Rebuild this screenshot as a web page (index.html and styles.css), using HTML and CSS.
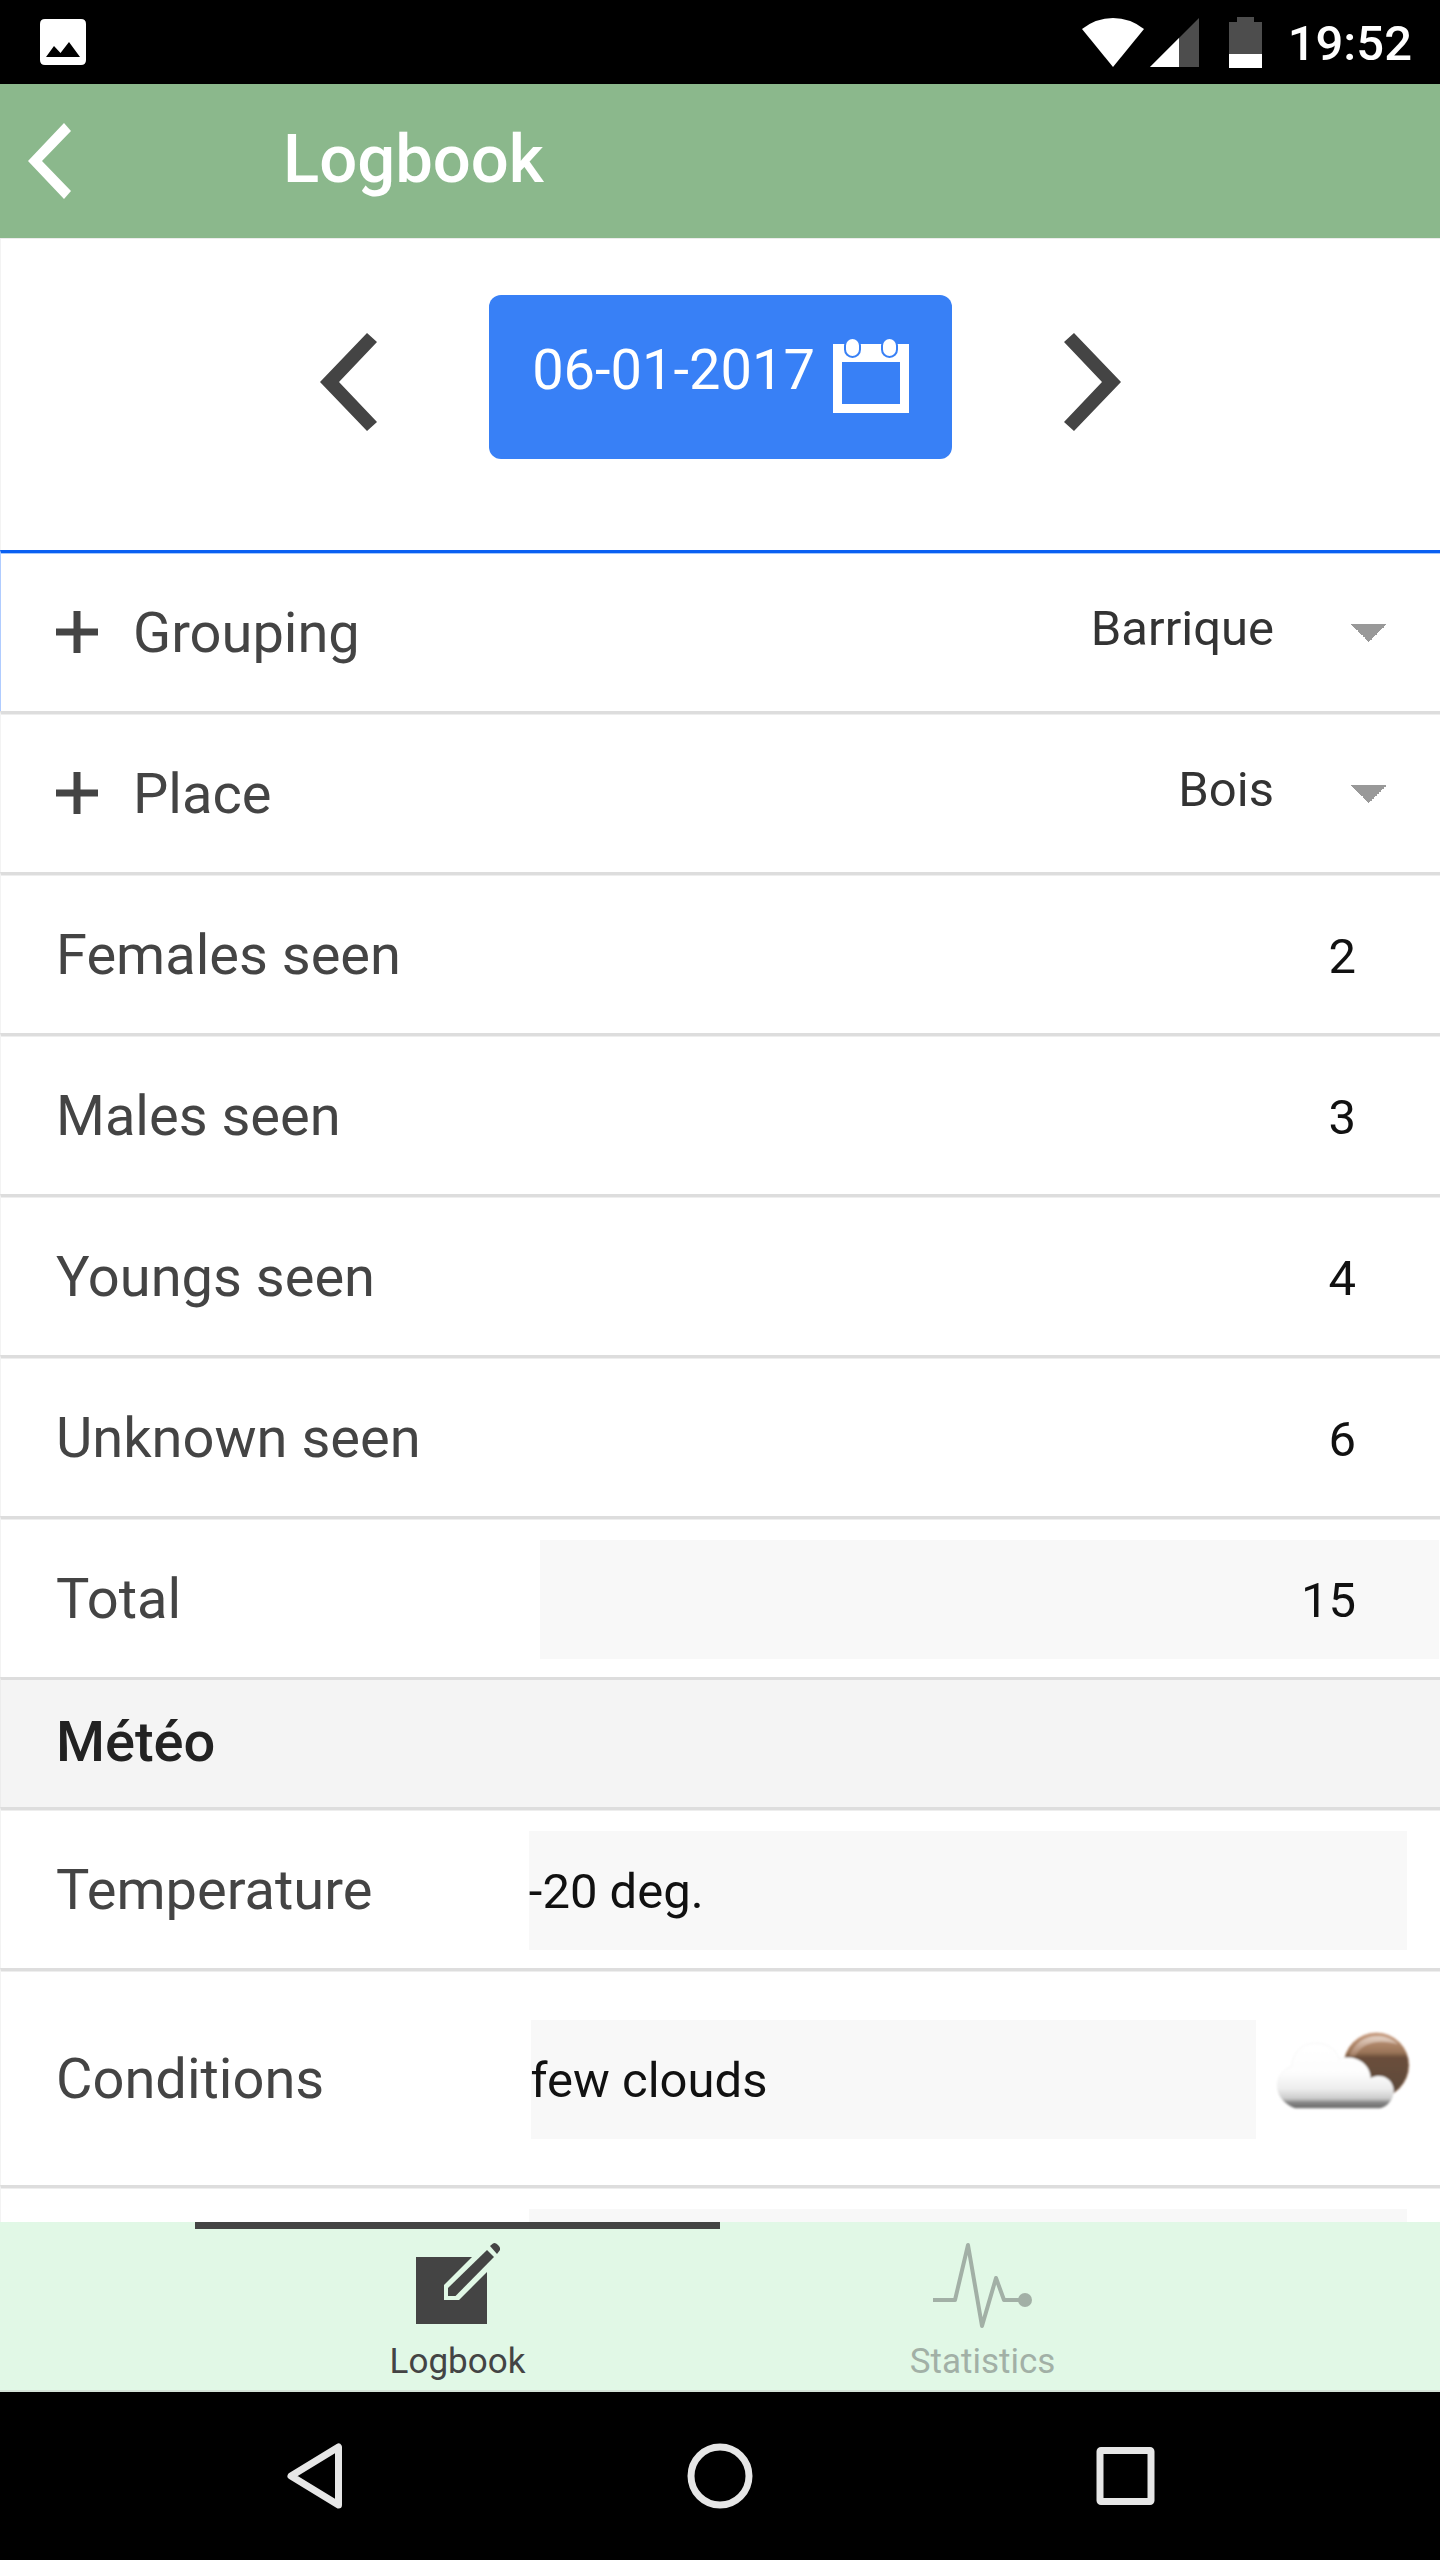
FILE: index.html
```html
<!DOCTYPE html>
<html lang="en">
<head>
  <meta charset="utf-8">
  <meta name="viewport" content="width=device-width, initial-scale=1">
  <title>Logbook</title>
  <link rel="stylesheet" href="styles.css">
</head>
<body>
<div class="app">
  <div class="status">
    <svg class="status-photo" width="46" height="46" viewBox="0 0 46 46" aria-hidden="true">
      <path fill="#fff" fill-rule="evenodd" d="M5 0H41Q46 0 46 5V41Q46 46 41 46H5Q0 46 0 41V5Q0 0 5 0ZM6 38H40L29 23L20.500 34L14 27Z"/>
    </svg>
    <svg width="62" height="49" viewBox="0 0 62 49" aria-hidden="true"><path fill="#fff" d="M31 49L0 11Q14 0 31 0T62 11Z"/></svg>
    <svg class="status-signal" width="49" height="49" viewBox="0 0 49 49" aria-hidden="true"><path fill="#4d4d4d" d="M49 0V49H0Z"/><path fill="#fff" d="M29 20V49H0Z"/></svg>
    <svg class="status-battery" width="33" height="51" viewBox="0 0 33 51" aria-hidden="true"><path fill="#4d4d4d" d="M8 0H25V5H33V37H0V5H8Z"/><path fill="#fff" d="M0 37H33V51H0Z"/></svg>
    <span class="status-time">19:52</span>
  </div>

  <header class="header">
    <button class="back" type="button" aria-label="Back">
      <svg width="43" height="76" viewBox="0 0 43 76" aria-hidden="true"><path fill="#fff" d="M36 0L43 8L14 38L43 68L36 76L0 38Z"/></svg>
    </button>
    <h1 class="title">Logbook</h1>
  </header>

  <main class="content">
    <div class="datebar">
      <button class="step" type="button" aria-label="Previous day">
        <svg width="57" height="98" viewBox="0 0 57 98" aria-hidden="true"><path fill="#444" d="M47 0L57 9L19 49L57 89L47 98L0 49Z"/></svg>
      </button>
      <button class="date" type="button">
        <span class="date-text">06-01-2017</span>
        <svg class="date-icon" width="76" height="74" viewBox="0 0 76 74" aria-hidden="true">
          <path fill="#fff" fill-rule="evenodd" d="M0 5H76V74H0ZM9 23V65H67V23Z"/>
          <g fill="#fff" stroke="#3880f6" stroke-width="2"><rect x="12" y="-1" width="15" height="19" rx="7.500"/><rect x="49" y="-1" width="15" height="19" rx="7.500"/></g>
        </svg>
      </button>
      <button class="step" type="button" aria-label="Next day">
        <svg width="57" height="98" viewBox="0 0 57 98" aria-hidden="true"><path fill="#444" d="M10 0L0 9L38 49L0 89L10 98L57 49Z"/></svg>
      </button>
    </div>

    <form class="list">
      <div class="row row-focus">
        <button class="add" type="button" aria-label="Add grouping"><svg width="42" height="42" viewBox="0 0 42 42" aria-hidden="true"><path fill="#444" d="M17.500 0H24.500V17.500H42V24.500H24.500V42H17.500V24.500H0V17.500H17.500Z"/></svg></button>
        <label class="label" for="grouping">Grouping</label>
        <select class="select" id="grouping"><option>Barrique</option></select>
      </div>
      <div class="row">
        <button class="add" type="button" aria-label="Add place"><svg width="42" height="42" viewBox="0 0 42 42" aria-hidden="true"><path fill="#444" d="M17.500 0H24.500V17.500H42V24.500H24.500V42H17.500V24.500H0V17.500H17.500Z"/></svg></button>
        <label class="label" for="place">Place</label>
        <select class="select" id="place"><option>Bois</option></select>
      </div>
      <div class="row">
        <label class="label label-col" for="females">Females seen</label>
        <input class="field field-num" id="females" type="text" inputmode="numeric" value="2">
      </div>
      <div class="row">
        <label class="label label-col" for="males">Males seen</label>
        <input class="field field-num" id="males" type="text" inputmode="numeric" value="3">
      </div>
      <div class="row">
        <label class="label label-col" for="youngs">Youngs seen</label>
        <input class="field field-num" id="youngs" type="text" inputmode="numeric" value="4">
      </div>
      <div class="row">
        <label class="label label-col" for="unknown">Unknown seen</label>
        <input class="field field-num" id="unknown" type="text" inputmode="numeric" value="6">
      </div>
      <div class="row">
        <label class="label label-col" for="total">Total</label>
        <input class="field field-num field-read" id="total" type="text" value="15" readonly>
      </div>
      <h2 class="divider">Météo</h2>
      <div class="row row-inset">
        <label class="label label-col" for="temperature">Temperature</label>
        <input class="field field-read" id="temperature" type="text" value="-20 deg." readonly>
      </div>
      <div class="row row-weather">
        <label class="label label-col" for="conditions">Conditions</label>
        <input class="field field-read" id="conditions" type="text" value="few clouds" readonly>
        <svg class="weather" width="137" height="98" viewBox="105 147 411 294" aria-hidden="true">
          <defs>
            <linearGradient id="disc" x1="0" y1="0" x2="0" y2="1">
              <stop offset="0" stop-color="#c99f83"/><stop offset=".3" stop-color="#9b7558"/><stop offset=".38" stop-color="#6a4e3a"/><stop offset="1" stop-color="#5c4a3c"/>
            </linearGradient>
            <linearGradient id="cloud" gradientUnits="userSpaceOnUse" x1="0" y1="183" x2="0" y2="382">
              <stop offset="0" stop-color="#fff"/><stop offset=".45" stop-color="#fdfdfd"/><stop offset=".7" stop-color="#eee"/><stop offset=".85" stop-color="#ccc"/><stop offset=".91" stop-color="#888"/><stop offset="1" stop-color="#686868"/>
            </linearGradient>
            <linearGradient id="shine" x1="0" y1="0" x2="0" y2="1">
              <stop offset="0" stop-color="#e6d5c9"/><stop offset="1" stop-color="#b7917a" stop-opacity=".5"/>
            </linearGradient>
            <filter id="soft" x="-10%" y="-10%" width="120%" height="120%"><feGaussianBlur stdDeviation="3"/></filter>
          </defs>
          <g filter="url(#soft)">
            <circle cx="409" cy="253" r="98" fill="url(#disc)" stroke="#d8ac91" stroke-width="3" stroke-opacity=".5"/>
            <path d="M328 226C345 180 382 162 420 166C445 168 463 178 474 190C430 178 375 174 345 226Z" fill="url(#shine)"/>
            <path d="M165 382C140 374 112 350 112 316C112 286 130 264 155 256C157 214 188 186 225 186C264 186 289 206 298 234C340 218 390 244 392 291C430 274 458 298 461 326C462 354 442 378 420 382Z" fill="url(#cloud)" stroke="#dedede" stroke-width="2" stroke-opacity=".4"/>
          </g>
        </svg>
      </div>
      <div class="row row-inset">
        <span class="label-col"></span>
        <input class="field field-read" type="text" aria-label="Weather details" readonly>
      </div>
    </form>
  </main>

  <nav class="tabs">
    <a class="tab tab-active" href="#logbook">
      <svg width="84" height="90" viewBox="0 0 84 90" aria-hidden="true">
        <g fill="currentColor"><path d="M0 15H56L28 43V58H43L71 30V82H0Z"/><path d="M71 8L78 15L39.500 54H32V46Z"/><path d="M74 4L77 1.500Q79 0 82 3T84 8L81 12Z"/></g>
      </svg>
      <span>Logbook</span>
    </a>
    <a class="tab" href="#statistics">
      <svg width="99" height="90" viewBox="0 0 99 90" aria-hidden="true">
        <path d="M0 58H22L35 3L49 84L63 36L71 58H91" fill="none" stroke="currentColor" stroke-width="4" stroke-linejoin="round"/><circle cx="92" cy="58" r="7" fill="currentColor"/>
      </svg>
      <span>Statistics</span>
    </a>
  </nav>

  <div class="sysnav">
    <button class="syskey" type="button" aria-label="Back"><svg width="70" height="70" viewBox="0 0 70 70" aria-hidden="true"><path d="M58.500 6V64L11 35Z" fill="none" stroke="#e6e6e6" stroke-width="7" stroke-linejoin="round"/></svg></button>
    <button class="syskey" type="button" aria-label="Home"><svg width="70" height="70" viewBox="0 0 70 70" aria-hidden="true"><circle cx="35" cy="35" r="29" fill="none" stroke="#e6e6e6" stroke-width="7"/></svg></button>
    <button class="syskey" type="button" aria-label="Recent apps"><svg width="70" height="70" viewBox="0 0 70 70" aria-hidden="true"><rect x="10" y="9.500" width="51" height="51" rx="1" fill="none" stroke="#e6e6e6" stroke-width="7" stroke-linejoin="round"/></svg></button>
  </div>
</div>
</body>
</html>
```

FILE: styles.css
```css
* {
  box-sizing: border-box;
}

body {
  margin: 0;
  background: #fff;
  font-family: Roboto, "Noto Sans", sans-serif;
  font-size: 56px;
  color: #444;
}

button {
  margin: 0;
  padding: 0;
  border: 0;
  background: none;
  font: inherit;
  color: inherit;
  cursor: pointer;
}

svg {
  display: block;
  flex: none;
}

.app {
  display: flex;
  flex-direction: column;
  height: 100vh;
}

/* System status bar */
.status {
  display: flex;
  flex: none;
  align-items: center;
  height: 84px;
  padding: 0 28px 0 40px;
  background: #000;
  color: #fff;
}

.status-photo {
  margin-right: auto;
}

.status-signal {
  margin-left: 6px;
}

.status-battery {
  margin: 0 26px 0 30px;
}

.status-time {
  font-size: 49px;
  font-weight: 500;
  line-height: 56px;
  padding-top: 4px;
}

/* App header */
.header {
  display: flex;
  flex: none;
  align-items: center;
  height: 154px;
  padding: 0 28px;
  background: #8bb88c;
  color: #fff;
}

.back {
  width: 255px;
}

.title {
  margin: 0;
  padding-bottom: 4px;
  font-size: 67px;
  font-weight: 500;
  line-height: 80px;
}

/* Scrolling page */
.content {
  flex: 1;
  min-height: 0;
  overflow-y: auto;
  scrollbar-width: none;
  border-top: 1px solid #ececec;
}

.datebar {
  display: flex;
  justify-content: center;
  gap: 112px;
  height: 311px;
  padding-top: 56px;
  border-left: 1px solid #f3f3f3;
}

.step {
  height: 164px;
  padding-top: 10px;
}

.date {
  display: flex;
  align-items: center;
  gap: 18px;
  height: 164px;
  padding: 0 43px;
  border-radius: 12px;
  background: #3880f6;
  color: #fff;
}

.date-text {
  padding-bottom: 14px;
}

.date-icon {
  margin-bottom: 2px;
}

.list {
  margin: 0;
}

.row {
  display: flex;
  align-items: center;
  min-height: 161px;
  padding: 1px 1px 0 55px;
  border-top: 3px solid #ddd;
  border-left: 1px solid #f3f3f3;
  box-shadow: inset 0 1px #eee;
}

.row-focus {
  border-top-color: #0a60f2;
  border-left-color: #b0ccff;
  box-shadow: inset 0 1px #a6c8fb;
}

.row-inset {
  padding-right: 33px;
}

.row-weather {
  min-height: 217px;
  padding-right: 28px;
}

.label {
  flex: none;
  line-height: 70px;
}

.label-col {
  flex: none;
  width: 35%;
}

.add {
  margin: 0 35px 2px 0;
}

.select {
  flex: 1;
  min-width: 0;
  height: 118px;
  margin: 0;
  padding: 0 165px 8px 0;
  border: 0;
  border-radius: 0;
  appearance: none;
  background:
    linear-gradient(to bottom right, #999 50%, transparent 50%) right 52px top 50px / 18px 18px no-repeat,
    linear-gradient(to bottom left, #999 50%, transparent 50%) right 70px top 50px / 18px 18px no-repeat;
  color: #333;
  font: 49px Roboto, "Noto Sans", sans-serif;
  text-align: right;
  text-align-last: right;
}

.field {
  flex: 1;
  min-width: 0;
  height: 119px;
  margin: 2px 0 0;
  padding: 2px 0 0;
  border: 0;
  background: none;
  color: #111;
  font: 49px Roboto, "Noto Sans", sans-serif;
}

.field-num {
  padding-right: 83px;
  text-align: right;
}

.field-read {
  background: #f8f8f8;
}

.weather {
  margin-left: 19px;
}

.divider {
  margin: 0;
  padding: 0 55px 2px;
  border-top: 3px solid #ddd;
  border-left: 1px solid #ececec;
  background: #f4f4f4;
  color: #222;
  font-size: 56px;
  font-weight: 500;
  line-height: 125px;
}

/* Bottom tabs */
.tabs {
  display: flex;
  flex: none;
  justify-content: center;
  height: 170px;
  border-bottom: 2px solid #d5e3d8;
  background: #e1f8e6;
}

.tab {
  display: flex;
  flex: 0 1 525px;
  flex-direction: column;
  align-items: center;
  padding-top: 13px;
  border-top: 7px solid transparent;
  color: #a2b0a6;
  font-size: 35px;
  line-height: 42px;
  text-decoration: none;
}

.tab span {
  padding-top: 9px;
}

.tab-active {
  border-top-color: #444;
  color: #444;
}

/* System navigation keys */
.sysnav {
  display: flex;
  flex: none;
  justify-content: center;
  align-items: center;
  height: 168px;
  background: #000;
}

.syskey {
  display: flex;
  flex: 0 1 405px;
  justify-content: center;
}
```
